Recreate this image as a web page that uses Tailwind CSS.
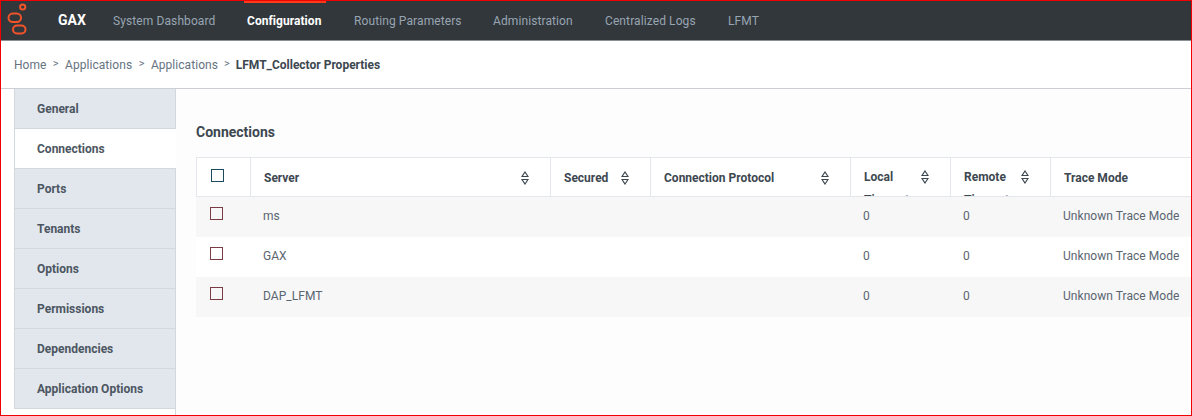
<!DOCTYPE html>
<html><head><meta charset="utf-8"><script src="https://cdn.jsdelivr.net/npm/@tailwindcss/browser@4"></script></head>
<body class="m-0 bg-white">
<div class="w-[1192px] h-[416px] border border-[#f00000] overflow-hidden font-['Roboto',sans-serif] flex flex-col bg-white">
  <header class="h-[40px] shrink-0 bg-[#32373b] border-b border-[#8a8f93] flex items-stretch text-[12px] tracking-[0.1px] text-[#98a5b3]">
    <div class="w-[57px] shrink-0">
      <svg width="20" height="32" viewBox="0 0 20 32" class="ml-[6px] mt-[2px]" fill="none" stroke="#f1542a" stroke-width="2"><circle cx="15.7" cy="4" r="2.6"/><rect x="1.5" y="10.5" width="12.5" height="8.5" rx="4.25"/><rect x="6" y="22.5" width="12.5" height="8" rx="4"/></svg>
    </div>
    <span class="flex items-center font-bold text-white text-[14px] tracking-normal w-[55px]">GAX</span>
    <span class="flex items-center w-[134px]">System Dashboard</span>
    <span class="relative flex items-center font-bold text-white w-[107px] tracking-[0.05px]"><i class="absolute left-[-3px] top-0 w-[82px] h-[2px] bg-[#ff3a1a]"></i>Configuration</span>
    <span class="flex items-center w-[139px]">Routing Parameters</span>
    <span class="flex items-center w-[112px]">Administration</span>
    <span class="flex items-center w-[123px]">Centralized Logs</span>
    <span class="flex items-center">LFMT</span>
  </header>
  <nav class="h-[48px] shrink-0 flex items-center pl-[13px] text-[12px] text-[#66737f] border-b border-[#ccd0d4]">
    <span>Home</span><span class="mx-[6.5px] text-[11px]">&gt;</span><span class="tracking-[0.05px]">Applications</span><span class="mx-[6.5px] text-[11px]">&gt;</span><span class="tracking-[0.05px]">Applications</span><span class="mx-[6px] text-[11px]">&gt;</span><span class="font-bold text-[#3d4750]">LFMT_Collector Properties</span>
  </nav>
  <div class="flex flex-1 min-h-0">
    <aside class="ml-[13px] w-[162px] shrink-0 text-[12px] font-bold text-[#4c5661]">
      <div class="h-[40px] pl-[22px] flex items-center bg-[#e2e7ee] border-l border-r border-b border-[#d3d8dd]">General</div>
      <div class="h-[40px] pl-[22px] flex items-center bg-white border-l border-b border-[#d3d8dd]">Connections</div>
      <div class="h-[40px] pl-[22px] flex items-center bg-[#e2e7ee] border-l border-r border-b border-[#d3d8dd]">Ports</div>
      <div class="h-[40px] pl-[22px] flex items-center bg-[#e2e7ee] border-l border-r border-b border-[#d3d8dd]">Tenants</div>
      <div class="h-[40px] pl-[22px] flex items-center bg-[#e2e7ee] border-l border-r border-b border-[#d3d8dd]">Options</div>
      <div class="h-[40px] pl-[22px] flex items-center bg-[#e2e7ee] border-l border-r border-b border-[#d3d8dd]">Permissions</div>
      <div class="h-[40px] pl-[22px] flex items-center bg-[#e2e7ee] border-l border-r border-b border-[#d3d8dd]">Dependencies</div>
      <div class="h-[40px] pl-[22px] flex items-center bg-[#e2e7ee] border-l border-r border-b border-[#d3d8dd]">Application Options</div>
      <div class="h-[7px] ml-[161px] border-l border-[#d3d8dd] w-px"></div>
    </aside>
    <main class="flex-1 min-w-0 pl-[20px] bg-[#fdfdfd]">
      <h2 class="mt-[35px] h-[16px] leading-[16px] text-[14px] font-bold text-[#3d4750] ml-0">Connections</h2>
      <div class="mt-[17px] w-[1000px] text-[12px]">
        <div class="grid grid-cols-[54px_300px_100px_200px_100px_100px_146px] h-[40px] bg-white border-y border-[#e4e8ed] font-bold text-[#3d4750]">
          <div class="border-l border-[#e4e8ed] pl-[14px] pt-[11px]"><span class="block w-[13px] h-[13px] border border-[#1c4a5e]"></span></div>
          <div class="border-l border-[#e4e8ed] pl-[13px] pr-[21px] pt-[2px] flex items-center justify-between">Server
            <svg width="8" height="14" viewBox="0 0 8 14" fill="none" stroke="#3d4750" stroke-width="1.2"><path d="M4 1 L7 5.5 H1 Z M4 13 L7 8.5 H1 Z"/></svg></div>
          <div class="border-l border-[#e4e8ed] pl-[13px] pr-[21px] pt-[2px] flex items-center justify-between">Secured
            <svg width="8" height="14" viewBox="0 0 8 14" fill="none" stroke="#3d4750" stroke-width="1.2"><path d="M4 1 L7 5.5 H1 Z M4 13 L7 8.5 H1 Z"/></svg></div>
          <div class="border-l border-[#e4e8ed] pl-[13px] pr-[21px] pt-[2px] flex items-center justify-between">Connection Protocol
            <svg width="8" height="14" viewBox="0 0 8 14" fill="none" stroke="#3d4750" stroke-width="1.2"><path d="M4 1 L7 5.5 H1 Z M4 13 L7 8.5 H1 Z"/></svg></div>
          <div class="border-l border-[#e4e8ed] pl-[13px] pr-[21px] flex justify-between overflow-hidden h-[38px]"><span class="w-[50px] leading-[23px] pt-[8px] block">Local Timeout</span>
            <svg width="8" height="14" viewBox="0 0 8 14" fill="none" stroke="#3d4750" stroke-width="1.2" class="mt-[12px]"><path d="M4 1 L7 5.5 H1 Z M4 13 L7 8.5 H1 Z"/></svg></div>
          <div class="border-l border-[#e4e8ed] pl-[13px] pr-[21px] flex justify-between overflow-hidden h-[38px]"><span class="w-[50px] leading-[23px] pt-[8px] block">Remote Timeout</span>
            <svg width="8" height="14" viewBox="0 0 8 14" fill="none" stroke="#3d4750" stroke-width="1.2" class="mt-[12px]"><path d="M4 1 L7 5.5 H1 Z M4 13 L7 8.5 H1 Z"/></svg></div>
          <div class="border-l border-[#e4e8ed] pl-[13px] pt-[2px] flex items-center">Trace Mode</div>
        </div>
        <div class="grid grid-cols-[54px_300px_100px_200px_100px_100px_146px] h-[40px] pb-[2px] items-center bg-[#f7f7f8] text-[#5a6570] tracking-[0.05px]">
          <div class="pl-[14px] pb-[6px]"><span class="block w-[13px] h-[13px] border border-[#7a3b44]"></span></div><div class="pl-[13px]">ms</div><div></div><div></div><div class="pl-[13px]">0</div><div class="pl-[13px]">0</div><div class="pl-[13px]">Unknown Trace Mode</div>
        </div>
        <div class="grid grid-cols-[54px_300px_100px_200px_100px_100px_146px] h-[40px] pb-[2px] items-center bg-white text-[#5a6570] tracking-[0.05px]">
          <div class="pl-[14px] pb-[6px]"><span class="block w-[13px] h-[13px] border border-[#7a3b44]"></span></div><div class="pl-[13px]">GAX</div><div></div><div></div><div class="pl-[13px]">0</div><div class="pl-[13px]">0</div><div class="pl-[13px]">Unknown Trace Mode</div>
        </div>
        <div class="grid grid-cols-[54px_300px_100px_200px_100px_100px_146px] h-[40px] pb-[2px] items-center bg-[#f7f7f8] text-[#5a6570] tracking-[0.05px]">
          <div class="pl-[14px] pb-[6px]"><span class="block w-[13px] h-[13px] border border-[#7a3b44]"></span></div><div class="pl-[13px]">DAP_LFMT</div><div></div><div></div><div class="pl-[13px]">0</div><div class="pl-[13px]">0</div><div class="pl-[13px]">Unknown Trace Mode</div>
        </div>
      </div>
    </main>
  </div>
</div>
</body></html>
